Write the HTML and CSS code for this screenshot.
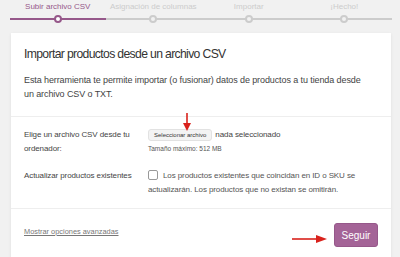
FILE: index.html
```html
<!DOCTYPE html>
<html>
	<head>
		<title>Importar productos</title>
		<link rel="stylesheet" href="styles.css">
	</head>
	<body>
		<ol class="steps">
			<li class="active">Subir archivo CSV</li>
			<li>Asignación de columnas</li>
			<li>Importar</li>
			<li>¡Hecho!</li>
		</ol>
		<div class="card">
			<header class="cardHead">
				<h2>Importar productos desde un archivo CSV</h2>
				<p>Esta herramienta te permite importar (o fusionar) datos de productos a tu tienda desde un archivo CSV o TXT.</p>
			</header>
			<section class="cardBody">
				<div class="row">
					<label class="rowLabel">Elige un archivo CSV desde tu ordenador:</label>
					<div class="field">
						<div class="fileLine">
							<button type="button" class="fileBtn">Seleccionar archivo</button>
							<span>nada seleccionado</span>
						</div>
						<small>Tamaño máximo: 512 MB</small>
					</div>
				</div>
				<div class="row">
					<label class="rowLabel">Actualizar productos existentes</label>
					<div class="field checkText">
						<span class="box"></span>Los productos existentes que coincidan en ID o SKU se actualizarán. Los productos que no existan se omitirán.
					</div>
				</div>
				<svg class="arrowDown" width="10" height="19" viewBox="0 0 10 19">
					<line x1="5" y1="0" x2="5" y2="12" stroke="#d9221c" stroke-width="1.6"/>
					<polygon points="1,10 9,10 5,18" fill="#d9221c"/>
				</svg>
			</section>
			<footer class="cardFoot">
				<a href="#" class="advLink">Mostrar opciones avanzadas</a>
				<button type="button" class="nextBtn">Seguir</button>
				<svg class="arrowRight" width="36" height="10" viewBox="0 0 36 10">
					<line x1="0" y1="5" x2="26" y2="5" stroke="#d9221c" stroke-width="1.6"/>
					<polygon points="24,1 24,9 35,5" fill="#d9221c"/>
				</svg>
			</footer>
		</div>
	</body>
</html>
```

FILE: styles.css
```css
body{
	margin: 0;
	background: #f1f1f1;
	font-family: "Liberation Sans", Arial, sans-serif;
	color: #444;
}
.steps{
	display: flex;
	list-style: none;
	margin: 0;
	padding: 2px 8px 0 10px;
}
.steps li{
	position: relative;
	flex: 1;
	text-align: center;
	font-size: 8px;
	line-height: 10px;
	color: #ccc;
	padding-bottom: 6px;
	border-bottom: 2px solid #ccc;
}
.steps li::after{
	content: "";
	position: absolute;
	left: 50%;
	bottom: -5px;
	margin-left: -4px;
	width: 4px;
	height: 4px;
	border: 2px solid #ccc;
	border-radius: 50%;
	background: #f1f1f1;
}
.steps .active{
	color: #96588a;
	border-bottom-color: #96588a;
}
.steps .active::after{
	border-color: #96588a;
	background: #fff;
}
.card{
	margin: 13px 9px 0 11px;
	background: #fff;
	box-shadow: 0 1px 3px rgba(0,0,0,0.08);
}
.cardHead{
	padding: 12px 13px 15px;
	border-bottom: 1px solid #eee;
}
.cardHead h2{
	margin: 0;
	font-size: 12.2px;
	line-height: 18px;
	letter-spacing: -0.65px;
	font-weight: normal;
	color: #333;
}
.cardHead p{
	margin: 10px 0 0;
	max-width: 348px;
	font-size: 9px;
	line-height: 14px;
	letter-spacing: -0.1px;
	color: #444;
}
.cardBody{
	position: relative;
	padding: 11px 13px 11px;
	border-bottom: 1px solid #eee;
}
.row{
	display: flex;
	font-size: 8px;
	line-height: 14px;
	letter-spacing: -0.1px;
}
.row + .row{
	margin-top: 13px;
}
.rowLabel{
	width: 124px;
	flex-shrink: 0;
	color: #444;
}
.field{
	flex: 1;
}
.fileLine{
	display: flex;
	align-items: center;
	gap: 3px;
	height: 14px;
}
.fileBtn{
	font-family: inherit;
	font-size: 6px;
	line-height: 8px;
	padding: 1px 5px;
	background: #f3f3f3;
	border: 1px solid #e2e2e2;
	border-radius: 3px;
	color: #333;
}
.field small{
	display: block;
	margin-top: 1px;
	font-size: 6.5px;
	line-height: 12px;
	letter-spacing: 0;
	color: #555;
}
.checkText{
	color: #555;
}
.box{
	display: inline-block;
	width: 8px;
	height: 8px;
	border: 1px solid #999;
	border-radius: 2px;
	vertical-align: -2px;
	margin-right: 5px;
}
.arrowDown{
	position: absolute;
	left: 171px;
	top: -4px;
}
.cardFoot{
	position: relative;
	display: flex;
	justify-content: space-between;
	align-items: center;
	padding: 14px 13px 14px;
	background: #fff;
}
.advLink{
	font-size: 7.4px;
	line-height: 10px;
	margin-top: -6px;
	color: #777;
}
.nextBtn{
	font-family: inherit;
	font-size: 10px;
	color: #fff;
	background: #a46497;
	border: 1px solid #96588a;
	border-radius: 3px;
	width: 44px;
	height: 24px;
	padding: 0;
}
.arrowRight{
	position: absolute;
	left: 281px;
	top: 25px;
}
```
